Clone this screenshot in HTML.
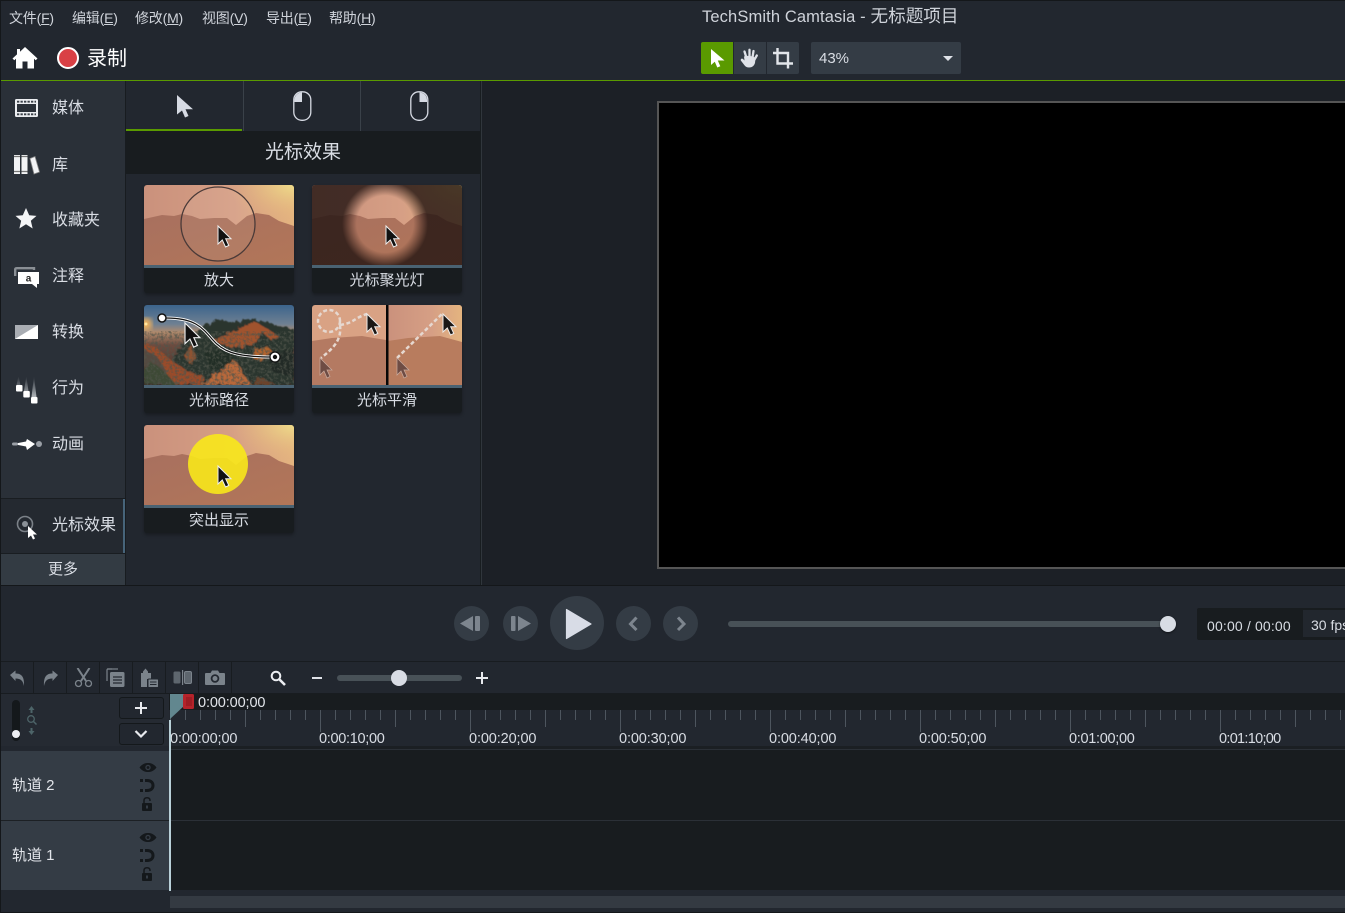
<!DOCTYPE html>
<html lang="zh"><head><meta charset="utf-8"><title>TechSmith Camtasia</title>
<style>
html,body{margin:0;padding:0;background:#22272f}
body{width:1345px;height:913px;position:relative;overflow:hidden;font-family:"Liberation Sans","Noto Sans CJK SC",sans-serif;color:#d9dde4}
.a{position:absolute}
.t{position:absolute;white-space:nowrap;line-height:1}
.m{font-size:14px;color:#cfd3da;letter-spacing:-.2px;top:11px}
.m u{text-decoration:underline;text-underline-offset:1px}
.card{position:absolute;width:150px;height:108px;background:#181c1f;border-radius:3px;overflow:hidden;box-shadow:0 2px 3px rgba(0,0,0,.3)}
.card svg{position:absolute;left:0;top:0}
.card i{position:absolute;left:0;top:80px;width:150px;height:3px;background:#4a6272}
.card b{position:absolute;left:0;top:83px;width:150px;height:25px;line-height:25px;font-weight:normal;font-size:15px;text-align:center;color:#d9dde4}
.s{position:absolute;left:52px;font-size:16px;line-height:1;white-space:nowrap;color:#d9dde4}
.c{position:absolute;border-radius:50%;background:#343c45}
.r{position:absolute;font-size:14.5px;line-height:1;white-space:nowrap;top:732px;color:#d9dde4;letter-spacing:-.12px}
</style></head><body>
<svg width="0" height="0" style="position:absolute"><defs>
<linearGradient id="sky" x1="0" y1="0" x2="1" y2="0"><stop offset="0" stop-color="#ca917c"/><stop offset=".6" stop-color="#d69f85"/><stop offset="1" stop-color="#e4b47f"/></linearGradient>
<radialGradient id="sun" cx="1" cy="0" r=".45"><stop offset="0" stop-color="#efe08a" stop-opacity=".9"/><stop offset="1" stop-color="#e6b47e" stop-opacity="0"/></radialGradient>
<linearGradient id="land" x1="0" y1="0" x2="1" y2="1"><stop offset="0" stop-color="#a8705f"/><stop offset="1" stop-color="#b27658"/></linearGradient>
<linearGradient id="psky" x1="0" y1="0" x2="0" y2="1"><stop offset="0" stop-color="#3c648c"/><stop offset=".24" stop-color="#6f8092"/><stop offset=".34" stop-color="#b08a6c"/><stop offset=".5" stop-color="#6e4c40"/><stop offset="1" stop-color="#3a2c26"/></linearGradient>
<radialGradient id="spot" gradientUnits="userSpaceOnUse" cx="73" cy="39" r="43"><stop offset="0" stop-color="#241512" stop-opacity="0"/><stop offset=".66" stop-color="#241512" stop-opacity="0"/><stop offset="1" stop-color="#241512" stop-opacity=".82"/></radialGradient>
<filter id="bl3"><feGaussianBlur stdDeviation="3"/></filter>
<filter id="rug" x="-10%" y="-10%" width="120%" height="120%"><feTurbulence type="fractalNoise" baseFrequency=".22" numOctaves="3" seed="4"/><feDisplacementMap in="SourceGraphic" scale="7"/><feGaussianBlur stdDeviation=".45"/></filter>
<filter id="grain" x="0" y="0" width="100%" height="100%"><feTurbulence type="fractalNoise" baseFrequency=".35" numOctaves="3" seed="9"/><feColorMatrix values="0 0 0 0 .08 0 0 0 0 .09 0 0 0 0 .07 0 0 0 3.200 -1.350"/></filter>
<linearGradient id="st" x1="0" y1="0" x2="0" y2="1"><stop offset="0" stop-color="#9aa0a6" stop-opacity="0"/><stop offset="1" stop-color="#b0b5ba"/></linearGradient>
<g id="sc"><rect width="150" height="80" fill="url(#sky)"/><rect width="150" height="80" fill="url(#sun)"/>
<path d="M0 34 18 30 30 31 38 29 48 31 56 34 70 33 83 33 92 40 103 31 112 28 125 30 135 36 150 41V80H0Z" fill="url(#land)"/></g>
<g id="cur"><path d="M0 0V18L4.300 14 7.500 21 10.800 19.500 7.700 12.800H13Z" fill="#111" stroke="#eee" stroke-width="1"/></g>
<g id="eye"><path d="M0 4.500C3 .5 6 0 8.500 0S14 .5 17 4.500C14 8.500 11 9 8.500 9S3 8.500 0 4.500Z" fill="#14181b"/><circle cx="8.500" cy="4.500" r="2.700" fill="#343c45"/><circle cx="8.500" cy="4.500" r="1.400" fill="#14181b"/></g>
<g id="mag"><path d="M5 1.500H7C11.500 1.500 13 4 13 6.500S11.500 11.500 7 11.500H5" fill="none" stroke="#14181b" stroke-width="3"/><rect x="0" y="0" width="3" height="3" fill="#14181b"/><rect x="0" y="10" width="3" height="3" fill="#14181b"/></g>
<g id="lock"><rect x="0" y="6" width="10" height="8" rx="1" fill="#14181b"/><path d="M2 6V3.500C2 1.500 3.500 .8 5 .8S8 1.500 8 3.500V4" fill="none" stroke="#14181b" stroke-width="1.500"/><rect x="4" y="8.500" width="2" height="3" fill="#343c45"/></g>
<pattern id="tk" x="170" y="0" width="150" height="23" patternUnits="userSpaceOnUse">
<path d="M.5 0V22M15.500 0V10M30.500 0V10M45.500 0V10M60.500 0V10M75.500 0V17M90.500 0V10M105.500 0V10M120.500 0V10M135.500 0V10" stroke="#4d555e" stroke-width="1" fill="none"/></pattern>
</defs></svg>

<!-- frame -->
<div class="a" style="left:0;top:0;width:1345px;height:1px;background:#14171a"></div>
<div class="a" style="left:0;top:0;width:1px;height:913px;background:#14171a"></div>
<div class="a" style="left:0;top:912px;width:1345px;height:1px;background:#14171a"></div>

<!-- menu -->
<div class="t m" style="left:9px">文件(<u>F</u>)</div>
<div class="t m" style="left:72px">编辑(<u>E</u>)</div>
<div class="t m" style="left:135px">修改(<u>M</u>)</div>
<div class="t m" style="left:202px">视图(<u>V</u>)</div>
<div class="t m" style="left:266px">导出(<u>E</u>)</div>
<div class="t m" style="left:329px">帮助(<u>H</u>)</div>
<div class="t" style="left:702px;top:8px;font-size:16.500px;color:#cfd3da;letter-spacing:.12px">TechSmith Camtasia - <span style="font-size:17.6px;letter-spacing:0">无标题项目</span></div>

<!-- home + record -->
<svg class="a" style="left:12px;top:47px" width="26" height="22" viewBox="0 0 26 22"><path d="M13 0 25.500 11.500 23.700 13.300 22 11.800V21.500H15.500V14.500H10.500V21.500H4V11.800L2.300 13.300 .5 11.500 5 7.400V2H8V4.700Z" fill="#fff"/></svg>
<div class="a" style="left:57px;top:47px;width:18px;height:18px;border:2px solid #fff;border-radius:50%;background:#d94045"></div>
<div class="t" style="left:87px;top:49px;font-size:20px;color:#fff">录制</div>

<!-- tool buttons -->
<div class="a" style="left:701px;top:42px;width:32px;height:32px;background:#5a9a00;border-radius:2px 0 0 2px"></div>
<div class="a" style="left:734px;top:42px;width:32px;height:32px;background:#343c45"></div>
<div class="a" style="left:767px;top:42px;width:32px;height:32px;background:#343c45;border-radius:0 2px 2px 0"></div>
<svg class="a" style="left:711px;top:49px" width="14" height="19" viewBox="0 0 14 19"><path d="M0 0V16L3.800 12.700 6.300 18.500 9.300 17.200 6.800 11.500H13.500Z" fill="#fff"/></svg>
<svg class="a" style="left:740px;top:48px" width="19" height="20" viewBox="0 0 19 20"><g stroke="#dfe2e8" stroke-width="2.300" stroke-linecap="round" fill="none"><path d="M6.500 10 4.500 3.500M9.500 9V1.800M12.500 9.500 13.500 3M14.500 11.500 16.800 7.500"/></g><path d="M4 8.500C7 7.500 12 7.500 15.500 10L15 15C14 18 12 19.500 9 19.500 6 19.500 5 18 3.500 16L.8 12.500C.3 11.300 1.800 10 3 11L4.500 12.500Z" fill="#dfe2e8"/></svg>
<svg class="a" style="left:772px;top:48px" width="22" height="21" viewBox="0 0 22 21"><path d="M5.500 0V15.500H21M1 5H16V20.500" fill="none" stroke="#e2e5ea" stroke-width="2.400"/></svg>
<div class="a" style="left:811px;top:42px;width:150px;height:32px;background:#343c45;border-radius:2px"></div>
<div class="t" style="left:819px;top:51px;font-size:15px;color:#d9dde4">43%</div>
<div class="a" style="left:943px;top:56px;width:0;height:0;border-left:5px solid transparent;border-right:5px solid transparent;border-top:5px solid #dfe2e8"></div>

<div class="a" style="left:1px;top:80px;width:1344px;height:1px;background:#5a9a00"></div>

<!-- sidebar -->
<div class="a" style="left:1px;top:81px;width:124px;height:504px;background:#2a3038"></div>
<div class="a" style="left:125px;top:81px;width:1px;height:504px;background:#181c20"></div>
<div class="a" style="left:1px;top:498px;width:124px;height:1px;background:#191d21"></div>
<div class="a" style="left:1px;top:499px;width:122px;height:54px;background:#242930"></div>
<div class="a" style="left:123px;top:499px;width:2px;height:54px;background:#47647a"></div>
<div class="a" style="left:1px;top:553px;width:124px;height:1px;background:#191d21"></div>
<div class="a" style="left:1px;top:554px;width:124px;height:31px;background:#333b43"></div>
<div class="t" style="left:48px;top:562px;font-size:15px;color:#d9dde4">更多</div>

<svg class="a" style="left:15px;top:99px" width="24" height="18" viewBox="0 0 24 18"><rect x="0" y="0" width="23" height="18" rx="1.500" fill="#eceef1"/><rect x="2" y="5" width="19" height="8" fill="#2a3038"/><path d="M2 2.700H21M2 15.300H21" stroke="#3a4048" stroke-width="1.800" stroke-dasharray="2.300 1.200"/></svg>
<div class="s" style="top:101px">媒体</div>
<svg class="a" style="left:14px;top:155px" width="26" height="20" viewBox="0 0 26 20"><rect x="0" y="0" width="6" height="19" fill="#f2f3f5"/><rect x="7.500" y="0" width="6" height="19" fill="#f2f3f5"/><path d="M0 1.500H6M7.500 1.500H13.500M0 16.500H6M7.500 16.500H13.500" stroke="#777" stroke-width="1.200"/><path d="M16 3.500 21 1.500 25.500 17 20 19Z" fill="#f2f3f5" stroke="#888" stroke-width=".8"/></svg>
<div class="s" style="top:158px">库</div>
<svg class="a" style="left:15px;top:208px" width="22" height="21" viewBox="0 0 24 23"><path d="M12 0 15.500 8 23.500 8.600 17.300 14 19.300 22.500 12 17.800 4.700 22.500 6.700 14 .5 8.600 8.500 8Z" fill="#f4f5f7"/></svg>
<div class="s" style="top:213px">收藏夹</div>
<svg class="a" style="left:14px;top:267px" width="26" height="21" viewBox="0 0 26 21"><path d="M1.200 9V2.500C1.200 1.500 2 1.200 3 1.200H20V3" fill="none" stroke="#8a8f95" stroke-width="2.400"/><path d="M4 5H25V17H23V21L18 17H4Z" fill="#fff"/><text x="14.500" y="14.500" font-size="10" font-weight="bold" text-anchor="middle" fill="#222" font-family="Liberation Sans">a</text></svg>
<div class="s" style="top:269px">注释</div>
<svg class="a" style="left:15px;top:325px" width="23" height="14" viewBox="0 0 23 14"><rect width="23" height="14" fill="#a9adb3"/><path d="M23 0V14H0Z" fill="#fff"/></svg>
<div class="s" style="top:325px">转换</div>
<svg class="a" style="left:15px;top:376px" width="24" height="29" viewBox="0 0 24 29"><path d="M3.500 0 5.500 9H1.500ZM11.300 0 13.500 15H9ZM19 0 21.500 21H16.500Z" fill="url(#st)"/><rect x="1" y="9" width="6.500" height="6.500" rx="1" fill="#fff"/><rect x="8.300" y="15" width="6.500" height="6.500" rx="1" fill="#fff"/><rect x="16" y="21" width="6.500" height="6.500" rx="1" fill="#fff"/></svg>
<div class="s" style="top:381px">行为</div>
<svg class="a" style="left:12px;top:436px" width="31" height="16" viewBox="0 0 31 16"><path d="M1 8 14 5.500 15 3 23 8 15 14 14 10.500Z" fill="#fff"/><rect x="0" y="6.500" width="6" height="3" rx="1.500" fill="#9a9fa6"/><circle cx="27" cy="8" r="3" fill="#9a9fa6"/></svg>
<div class="s" style="top:437px">动画</div>
<svg class="a" style="left:15px;top:513px" width="24" height="27" viewBox="0 0 24 27"><circle cx="10" cy="11" r="7.500" fill="none" stroke="#7b8188" stroke-width="1.600"/><circle cx="10" cy="11" r="3" fill="#8a9097"/><path d="M13 13V25L16 22.500 18 26.500 20 25.500 18 21.500H22Z" fill="#fff"/></svg>
<div class="s" style="top:518px">光标效果</div>

<!-- panel -->
<div class="a" style="left:126px;top:81px;width:354px;height:504px;background:#22272f"></div>
<div class="a" style="left:126px;top:129px;width:116px;height:2px;background:#5a9a00"></div>
<div class="a" style="left:243px;top:81px;width:1px;height:50px;background:#3a4149"></div>
<div class="a" style="left:360px;top:81px;width:1px;height:50px;background:#3a4149"></div>
<svg class="a" style="left:177px;top:95px" width="17" height="23" viewBox="0 0 17 23"><path d="M0 0V19.500L5 15.500 8 22.500 11.500 21 8.500 14.300H16Z" fill="#d6dae3"/></svg>
<svg class="a" style="left:292px;top:90px" width="21" height="32" viewBox="0 0 21 32"><rect x="1.800" y="1.800" width="17" height="28.500" rx="8" fill="none" stroke="#d6dae3" stroke-width="1.300"/><path d="M10 2.500V12H2.500V10C2.500 6 5.500 2.500 10 2.500Z" fill="#d6dae3"/></svg>
<svg class="a" style="left:409px;top:90px" width="21" height="32" viewBox="0 0 21 32"><rect x="1.800" y="1.800" width="17" height="28.500" rx="8" fill="none" stroke="#d6dae3" stroke-width="1.300"/><path d="M10.500 2.500V12H18V10C18 6 15 2.500 10.500 2.500Z" fill="#d6dae3"/></svg>
<div class="a" style="left:126px;top:131px;width:354px;height:43px;background:#181c1f"></div>
<div class="t" style="left:265px;top:143px;font-size:19px;color:#d9dde4">光标效果</div>

<!-- cards -->
<div class="card" style="left:144px;top:185px"><svg width="150" height="80" viewBox="0 0 150 80"><use href="#sc"/><circle cx="74" cy="39" r="37" fill="rgba(255,255,255,.06)" stroke="#4a3a38" stroke-width="1.300"/><use href="#cur" x="74" y="41"/></svg><i></i><b>放大</b></div>
<div class="card" style="left:312px;top:185px"><svg width="150" height="80" viewBox="0 0 150 80"><use href="#sc"/><rect width="150" height="80" fill="url(#spot)"/><use href="#cur" x="74" y="41"/></svg><i></i><b>光标聚光灯</b></div>
<div class="card" style="left:144px;top:305px"><svg width="150" height="80" viewBox="0 0 150 80"><rect width="150" height="80" fill="url(#psky)"/><circle cx="2" cy="19" r="6" fill="#f6b45a" filter="url(#bl3)"/><circle cx="2" cy="19" r="1.500" fill="#ffe6a0"/>
<g filter="url(#rug)"><path d="M35 42 50 30 60 20 75 15 90 17 108 14 125 18 150 24V80H20Z" fill="#2c352e"/><path d="M70 36 85 28 100 20 112 17 125 25 136 32 128 36 118 27 112 36 100 42 86 42Z" fill="#a0522e"/><path d="M112 44 124 42 128 46 118 56 110 54Z" fill="#b0642e"/><path d="M40 50 48 40 52 55 46 60Z" fill="#8e5230"/><path d="M0 38 14 44 28 56 44 66 60 72 56 80H0Z" fill="#9a4c2c"/><path d="M0 44 12 50 22 66 16 80H0Z" fill="#55493f"/><path d="M0 62 10 58 24 70 32 80H0Z" fill="#3d4a35"/><path d="M60 78 76 66 88 54 94 58 100 70 108 80H56Z" fill="#b8683a"/><path d="M112 72 125 76 132 80H108Z" fill="#6d422c"/><path d="M122 50 150 44V72L128 66Z" fill="#222c28"/><path d="M60 48 78 44 92 50 84 60 68 66Z" fill="#242d28"/></g>
<rect y="26" width="150" height="54" filter="url(#grain)" opacity=".75"/>
<path d="M22 13C50 13 58 22 68 34S90 52 128 52" fill="none" stroke="#fff" stroke-width="3"/><path d="M22 13C50 13 58 22 68 34S90 52 128 52" fill="none" stroke="#111" stroke-width="1.200"/>
<circle cx="18" cy="13" r="4" fill="#fff" stroke="#111" stroke-width="1.500"/><circle cx="131" cy="52" r="5" fill="#fff" stroke="#111" stroke-width="1.200"/><circle cx="131" cy="52" r="2.200" fill="#111"/>
<g transform="translate(41 18) scale(1.150)"><use href="#cur"/></g></svg><i></i><b>光标路径</b></div>
<div class="card" style="left:312px;top:305px"><svg width="150" height="80" viewBox="0 0 150 80"><rect width="150" height="80" fill="#d9a284"/><rect x="75" width="75" height="80" fill="url(#sky)"/><path d="M0 36 20 33 50 31 74 35V80H0Z" fill="#b47a62"/><path d="M76 36 96 33 128 31 150 37V80H76Z" fill="#b87c5e"/><rect x="74" width="2.500" height="80" fill="#060606"/>
<g fill="none" stroke="#e6d8d0" stroke-width="2.500" stroke-dasharray="4 2.500"><circle cx="17" cy="16" r="11"/><path d="M28 20C42 18 42 13 55 9"/><path d="M28 20C30 36 20 44 9 53"/><path d="M85 53 130 9"/></g>
<g opacity=".95"><use href="#cur" x="55" y="9"/><use href="#cur" x="131" y="9"/></g>
<path d="M8 53V70L12 66 15 73 18 71.500 15 65H20Z" fill="#6e4c44" stroke="#c9ab9e" stroke-width=".7"/><path d="M85 53V70L89 66 92 73 95 71.500 92 65H97Z" fill="#6e4c44" stroke="#c9ab9e" stroke-width=".7"/></svg><i></i><b>光标平滑</b></div>
<div class="card" style="left:144px;top:425px"><svg width="150" height="80" viewBox="0 0 150 80"><use href="#sc"/><circle cx="74" cy="39" r="30" fill="#f8e81a" opacity=".9"/><use href="#cur" x="74" y="41"/></svg><i></i><b>突出显示</b></div>

<!-- preview -->
<div class="a" style="left:480px;top:81px;width:1px;height:504px;background:#181d20"></div>
<div class="a" style="left:481px;top:81px;width:1px;height:504px;background:#30363c"></div>
<div class="a" style="left:482px;top:81px;width:863px;height:504px;background:#1c2026"></div>
<div class="a" style="left:657px;top:101px;width:688px;height:464px;background:#000;border:2px solid #555;border-right:none"></div>
<div class="a" style="left:1px;top:585px;width:1344px;height:1px;background:#14171a"></div>

<!-- transport -->
<div class="c" style="left:454px;top:606px;width:35px;height:35px"></div>
<div class="c" style="left:503px;top:606px;width:35px;height:35px"></div>
<div class="c" style="left:550px;top:596px;width:54px;height:54px"></div>
<div class="c" style="left:616px;top:606px;width:35px;height:35px"></div>
<div class="c" style="left:663px;top:606px;width:35px;height:35px"></div>
<svg class="a" style="left:454px;top:606px" width="35" height="35" viewBox="0 0 35 35"><path d="M6 17.500 19 10V25Z" fill="#7d858e"/><rect x="21" y="10" width="5" height="15" rx="1" fill="#7d858e"/></svg>
<svg class="a" style="left:503px;top:606px" width="35" height="35" viewBox="0 0 35 35"><path d="M28 17.500 15 10V25Z" fill="#7d858e"/><rect x="8" y="10" width="4.500" height="15" rx="1" fill="#7d858e"/></svg>
<svg class="a" style="left:550px;top:596px" width="54" height="54" viewBox="0 0 54 54"><path d="M16.500 13.500V42.500L41 28Z" fill="#d8dce6" stroke="#d8dce6" stroke-width="1.200" stroke-linejoin="round"/></svg>
<svg class="a" style="left:616px;top:606px" width="35" height="35" viewBox="0 0 35 35"><path d="M20.500 11.500 14.500 18 20.500 24" fill="none" stroke="#7d858e" stroke-width="3"/></svg>
<svg class="a" style="left:663px;top:606px" width="35" height="35" viewBox="0 0 35 35"><path d="M15 11.500 21 18 15 24" fill="none" stroke="#7d858e" stroke-width="3"/></svg>
<div class="a" style="left:728px;top:621px;width:440px;height:6px;border-radius:3px;background:#485157"></div>
<div class="a" style="left:1160px;top:616px;width:16px;height:16px;border-radius:50%;background:#d8dce4;box-shadow:0 1px 2px rgba(0,0,0,.5)"></div>
<div class="a" style="left:1197px;top:608px;width:148px;height:32px;background:#181c1f;border-radius:2px 0 0 2px"></div>
<div class="a" style="left:1303px;top:610px;width:42px;height:27px;background:#22272e"></div>
<div class="t" style="left:1207px;top:619px;font-size:14px;color:#d9dde4;letter-spacing:.16px">00:00 / 00:00</div>
<div class="t" style="left:1311px;top:618px;font-size:14px;color:#d9dde4">30 fps</div>
<div class="a" style="left:1px;top:661px;width:1344px;height:1px;background:#181c20"></div>

<!-- toolbar -->
<div class="a" style="left:33px;top:662px;width:1px;height:31px;background:#181c20"></div>
<div class="a" style="left:66px;top:662px;width:1px;height:31px;background:#181c20"></div>
<div class="a" style="left:99px;top:662px;width:1px;height:31px;background:#181c20"></div>
<div class="a" style="left:132px;top:662px;width:1px;height:31px;background:#181c20"></div>
<div class="a" style="left:165px;top:662px;width:1px;height:31px;background:#181c20"></div>
<div class="a" style="left:198px;top:662px;width:1px;height:31px;background:#181c20"></div>
<div class="a" style="left:231px;top:662px;width:1px;height:31px;background:#181c20"></div>
<svg class="a" style="left:9px;top:669px" width="17" height="18" viewBox="0 0 17 18"><path d="M1 6 6.500 1.500V4.500C12 4.500 15.500 7 15 17 14 12 12 9.500 6.500 9.500V12Z" fill="#7b838b"/></svg>
<svg class="a" style="left:42px;top:669px" width="17" height="18" viewBox="0 0 17 18"><path d="M16 6 10.500 1.500V4.500C5 4.500 1.500 7 2 17 3 12 5 9.500 10.500 9.500V12Z" fill="#7b838b"/></svg>
<svg class="a" style="left:74px;top:668px" width="19" height="20" viewBox="0 0 19 20"><path d="M3.500 0 12 13M15.500 0 7 13" stroke="#7b838b" stroke-width="2" fill="none"/><circle cx="4.500" cy="15.500" r="3" fill="none" stroke="#7b838b" stroke-width="1.300"/><circle cx="14.500" cy="15.500" r="3" fill="none" stroke="#7b838b" stroke-width="1.300"/></svg>
<svg class="a" style="left:106px;top:668px" width="20" height="20" viewBox="0 0 20 20"><path d="M6 1H2Q1 1 1 2V13" fill="none" stroke="#7b838b" stroke-width="1.200"/><path d="M1 1H12" stroke="#7b838b" stroke-width="1.200"/><rect x="4" y="4" width="14.500" height="15" rx="1.500" fill="#7b838b"/><path d="M7 9H16M7 12H16M7 15H16" stroke="#232830" stroke-width="1.200"/></svg>
<svg class="a" style="left:140px;top:668px" width="19" height="20" viewBox="0 0 19 20"><path d="M3 3.500 5.500 .5 8 3.500V5H11V11H7V19H1V5H3Z" fill="#7b838b"/><rect x="8" y="11" width="10.500" height="8.500" rx="1" fill="#7b838b" stroke="#232830"/><path d="M10 14H16.500M10 16.500H16.500" stroke="#232830"/></svg>
<svg class="a" style="left:173px;top:670px" width="19" height="15" viewBox="0 0 19 15"><rect x=".5" y="1.500" width="7" height="12" rx="1.500" fill="#5e666e"/><rect x="11.500" y="1.500" width="7" height="12" rx="1.500" fill="#5e666e" stroke="#7b838b"/><rect x="9" y="0" width="1.200" height="15" fill="#7b838b"/></svg>
<svg class="a" style="left:205px;top:670px" width="20" height="15" viewBox="0 0 20 15"><path d="M1 3H5.500L7 .5H13L14.500 3H19Q20 3 20 4V14Q20 15 19 15H1Q0 15 0 14V4Q0 3 1 3Z" fill="#7b838b"/><circle cx="10" cy="8.500" r="4.300" fill="#232830"/><circle cx="10" cy="8.500" r="2.500" fill="#7b838b"/></svg>
<svg class="a" style="left:270px;top:670px" width="16" height="16" viewBox="0 0 16 16"><circle cx="6" cy="6" r="4.300" fill="none" stroke="#eceef2" stroke-width="2"/><path d="M9.500 9.500 15 15" stroke="#eceef2" stroke-width="2.600"/></svg>
<div class="a" style="left:312px;top:677px;width:10px;height:2px;background:#dfe2e8"></div>
<div class="a" style="left:337px;top:675px;width:125px;height:6px;border-radius:3px;background:#485157"></div>
<div class="a" style="left:391px;top:670px;width:16px;height:16px;border-radius:50%;background:#d8dce4"></div>
<svg class="a" style="left:476px;top:672px" width="12" height="12" viewBox="0 0 12 12"><path d="M6 0V12M0 6H12" stroke="#e8eaee" stroke-width="2"/></svg>
<div class="a" style="left:1px;top:693px;width:1344px;height:1px;background:#181c20"></div>

<!-- timeline head left -->
<div class="a" style="left:1px;top:694px;width:168px;height:52px;background:#252a32"></div>
<div class="a" style="left:1px;top:746px;width:168px;height:5px;background:#22272f"></div>
<div class="a" style="left:12px;top:700px;width:8px;height:41px;border-radius:4px;background:#14181b"></div>
<div class="a" style="left:12px;top:730px;width:8px;height:8px;border-radius:50%;background:#eceef2"></div>
<svg class="a" style="left:26px;top:705px" width="12" height="31" viewBox="0 0 12 31"><path d="M5.500 1 8.500 5H6.500V8H4.500V5H2.500ZM5.500 30 8.500 26H6.500V23H4.500V26H2.500Z" fill="#4d6468"/><circle cx="5" cy="14" r="3.300" fill="none" stroke="#4d6468" stroke-width="1.300"/><path d="M7.500 16.500 10.500 19.500" stroke="#4d6468" stroke-width="1.500"/></svg>
<div class="a" style="left:119px;top:697px;width:43px;height:20px;background:#22272f;border:1px solid #14181b;border-radius:3px"></div>
<div class="a" style="left:119px;top:723px;width:43px;height:20px;background:#22272f;border:1px solid #14181b;border-radius:3px"></div>
<svg class="a" style="left:135px;top:702px" width="12" height="12" viewBox="0 0 12 12"><path d="M6 0V12M0 6H12" stroke="#e8eaee" stroke-width="2"/></svg>
<svg class="a" style="left:134px;top:729px" width="14" height="10" viewBox="0 0 14 10"><path d="M1.500 2 7 7.500 12.500 2" fill="none" stroke="#e8eaee" stroke-width="2.200"/></svg>

<!-- ruler -->
<div class="a" style="left:169px;top:694px;width:1176px;height:16px;background:#181c1f"></div>
<div class="a" style="left:169px;top:710px;width:1176px;height:36px;background:#22272f"></div>
<svg class="a" style="left:0;top:710px" width="1345" height="23"><rect x="170" width="1175" height="23" fill="url(#tk)"/></svg>
<div class="a" style="left:169px;top:746px;width:1176px;height:4px;background:#1b1f23"></div>
<div class="r" style="left:170px">0:00:00;00</div>
<div class="r" style="left:319px;letter-spacing:-.3px">0:00:10;00</div>
<div class="r" style="left:469px">0:00:20;00</div>
<div class="r" style="left:619px">0:00:30;00</div>
<div class="r" style="left:769px">0:00:40;00</div>
<div class="r" style="left:919px">0:00:50;00</div>
<div class="r" style="left:1069px;letter-spacing:-.3px">0:01:00;00</div>
<div class="r" style="left:1219px;letter-spacing:-.7px">0:01:10;00</div>
<div class="t" style="left:198px;top:696px;font-size:14.500px;color:#e2e5ea;letter-spacing:-.12px">0:00:00;00</div>
<svg class="a" style="left:169px;top:694px" width="26" height="26" viewBox="0 0 26 26"><path d="M1 0H15V12L1 25Z" fill="#62878f"/><rect x="14" y="0" width="11" height="15" rx="1.500" fill="#b5232a"/><path d="M18 3V12M20 3V12M22 3V12" stroke="#7c1519" stroke-width=".8"/></svg>

<!-- tracks -->
<div class="a" style="left:1px;top:751px;width:168px;height:69px;background:#343c45"></div>
<div class="a" style="left:1px;top:820px;width:168px;height:1px;background:#1c2024"></div>
<div class="a" style="left:1px;top:821px;width:168px;height:69px;background:#343c45"></div>
<div class="a" style="left:169px;top:750px;width:1176px;height:140px;background:#181c1f"></div>
<div class="a" style="left:169px;top:749px;width:1176px;height:1px;background:#2b3037"></div>
<div class="a" style="left:169px;top:820px;width:1176px;height:1px;background:#2b3037"></div>
<div class="t" style="left:12px;top:778px;font-size:15px;color:#e2e5ea">轨道 2</div>
<div class="t" style="left:12px;top:848px;font-size:15px;color:#e2e5ea">轨道 1</div>
<svg class="a" style="left:139px;top:762px" width="18" height="50" viewBox="0 0 18 50"><use href="#eye" x=".5" y="1"/><use href="#mag" x="1" y="17"/><use href="#lock" x="3" y="35"/></svg>
<svg class="a" style="left:139px;top:832px" width="18" height="50" viewBox="0 0 18 50"><use href="#eye" x=".5" y="1"/><use href="#mag" x="1" y="17"/><use href="#lock" x="3" y="35"/></svg>
<div class="a" style="left:169px;top:720px;width:2px;height:171px;background:#b9d0d8"></div>

<!-- scrollbar -->
<div class="a" style="left:170px;top:896px;width:1175px;height:12px;background:#343a42"></div>
</body></html>
